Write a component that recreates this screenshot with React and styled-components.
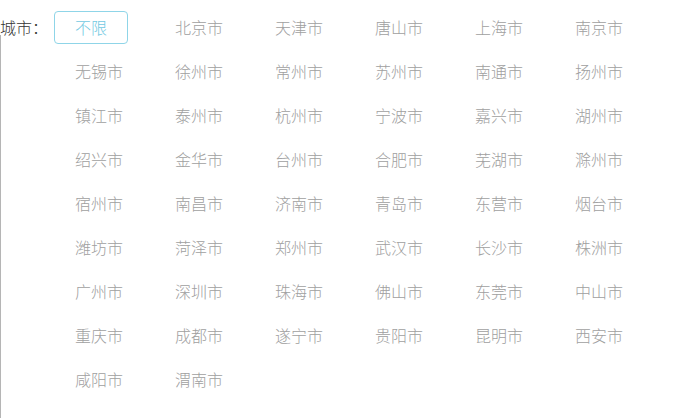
import React from "react";
import styled, { createGlobalStyle } from "styled-components";

const Global = createGlobalStyle`
  html, body { margin: 0; padding: 0; background: #fff; }
  body { font-family: "Noto Sans CJK SC", "Noto Sans", sans-serif; }
`;

const Wrapper = styled.div`
  display: grid;
  grid-template-columns: 54px 600px;
  align-items: start;
  padding-top: 11px;
  min-height: 407px;
  background: linear-gradient(#b5b5b5, #b5b5b5) no-repeat 0 35px / 1px 100%;
`;

const Label = styled.div`
  height: 33px;
  line-height: 33px;
  font-size: 16px;
  font-weight: 300;
  color: #333;
  white-space: nowrap;
`;

const Options = styled.div`
  display: grid;
  grid-template-columns: repeat(6, 100px);
  grid-auto-rows: 33px;
  row-gap: 11px;
`;

const Option = styled.span`
  justify-self: start;
  box-sizing: border-box;
  height: 33px;
  padding: 0 20px;
  line-height: 31px;
  font-size: 16px;
  font-weight: 300;
  border: 1px solid ${(p) => (p.$active ? "#8fd5e8" : "transparent")};
  border-radius: 4px;
  color: ${(p) => (p.$active ? "#72c9e2" : "#a0a0a0")};
  white-space: nowrap;
  cursor: pointer;
`;

const cities = [
  "北京市", "天津市", "唐山市", "上海市", "南京市",
  "无锡市", "徐州市", "常州市", "苏州市", "南通市", "扬州市",
  "镇江市", "泰州市", "杭州市", "宁波市", "嘉兴市", "湖州市",
  "绍兴市", "金华市", "台州市", "合肥市", "芜湖市", "滁州市",
  "宿州市", "南昌市", "济南市", "青岛市", "东营市", "烟台市",
  "潍坊市", "菏泽市", "郑州市", "武汉市", "长沙市", "株洲市",
  "广州市", "深圳市", "珠海市", "佛山市", "东莞市", "中山市",
  "重庆市", "成都市", "遂宁市", "贵阳市", "昆明市", "西安市",
  "咸阳市", "渭南市",
];

export default function App() {
  return (
    <>
      <Global />
      <Wrapper>
        <Label>城市：</Label>
        <Options>
          <Option $active>不限</Option>
          {cities.map((c) => (
            <Option key={c}>{c}</Option>
          ))}
        </Options>
      </Wrapper>
    </>
  );
}
